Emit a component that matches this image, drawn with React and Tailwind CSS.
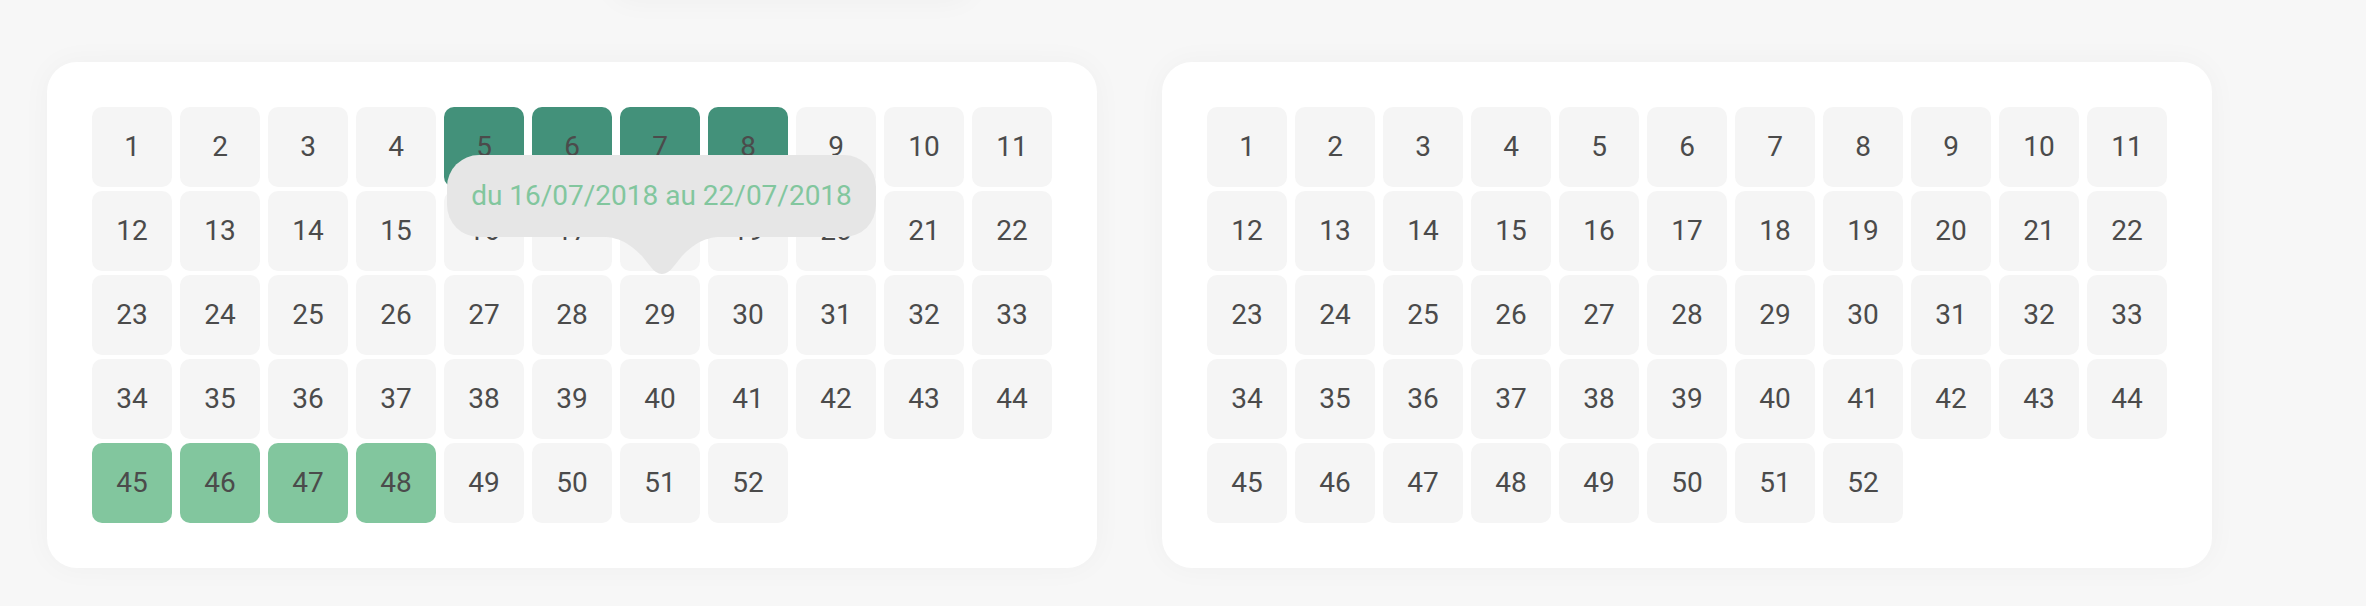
import React from "react";

const weeks = Array.from({ length: 52 }, (_, i) => i + 1);

const cellColor = (n, highlight) => {
  if (!highlight) return "bg-[#f5f5f5]";
  if (n >= 5 && n <= 8) return "bg-[#43917a]";
  if (n >= 45 && n <= 48) return "bg-[#82c69e]";
  return "bg-[#f5f5f5]";
};

const Tooltip = () => (
  <div className="absolute left-[400px] top-[93px] flex w-[429px] flex-col items-center">
    <div className="flex h-[82px] w-full items-center justify-center rounded-[32px] bg-[#e6e6e6] text-[28px] text-[#82c69e]">
      du 16/07/2018 au 22/07/2018
    </div>
    <svg width="140" height="44" viewBox="0 0 140 44" className="-mt-px">
      <path
        d="M0 0 C 26 0 36 6 50 20 L 58 30 Q 70 46 82 30 L 90 20 C 104 6 114 0 140 0 Z"
        fill="#e6e6e6"
      />
    </svg>
  </div>
);

const WeekCard = ({ highlight }) => (
  <div className="relative rounded-[30px] bg-white p-[45px] shadow-[0_0_30px_rgba(0,0,0,0.035)]">
    <div className="grid w-[960px] grid-cols-[repeat(11,80px)] gap-x-[8px] gap-y-[4px]">
      {weeks.map((n) => (
        <div
          key={n}
          className={`flex h-[80px] items-center justify-center rounded-[10px] text-[28px] text-[#4b4b4b] ${cellColor(n, highlight)}`}
        >
          {n}
        </div>
      ))}
    </div>
    {highlight && <Tooltip />}
  </div>
);

export default function App() {
  return (
    <div
      className="h-[606px] w-[2366px] overflow-hidden bg-[#f7f7f7]"
      style={{ fontFamily: "Roboto, 'Noto Sans', sans-serif" }}
    >
      <div className="-mt-[40px] ml-[612px] h-[40px] w-[360px] rounded-[30px] bg-[#f7f7f7] shadow-[0_0_30px_rgba(0,0,0,0.04)]" />
      <div className="flex gap-[65px] pl-[47px] pt-[62px]">
        <WeekCard highlight />
        <WeekCard />
      </div>
    </div>
  );
}
